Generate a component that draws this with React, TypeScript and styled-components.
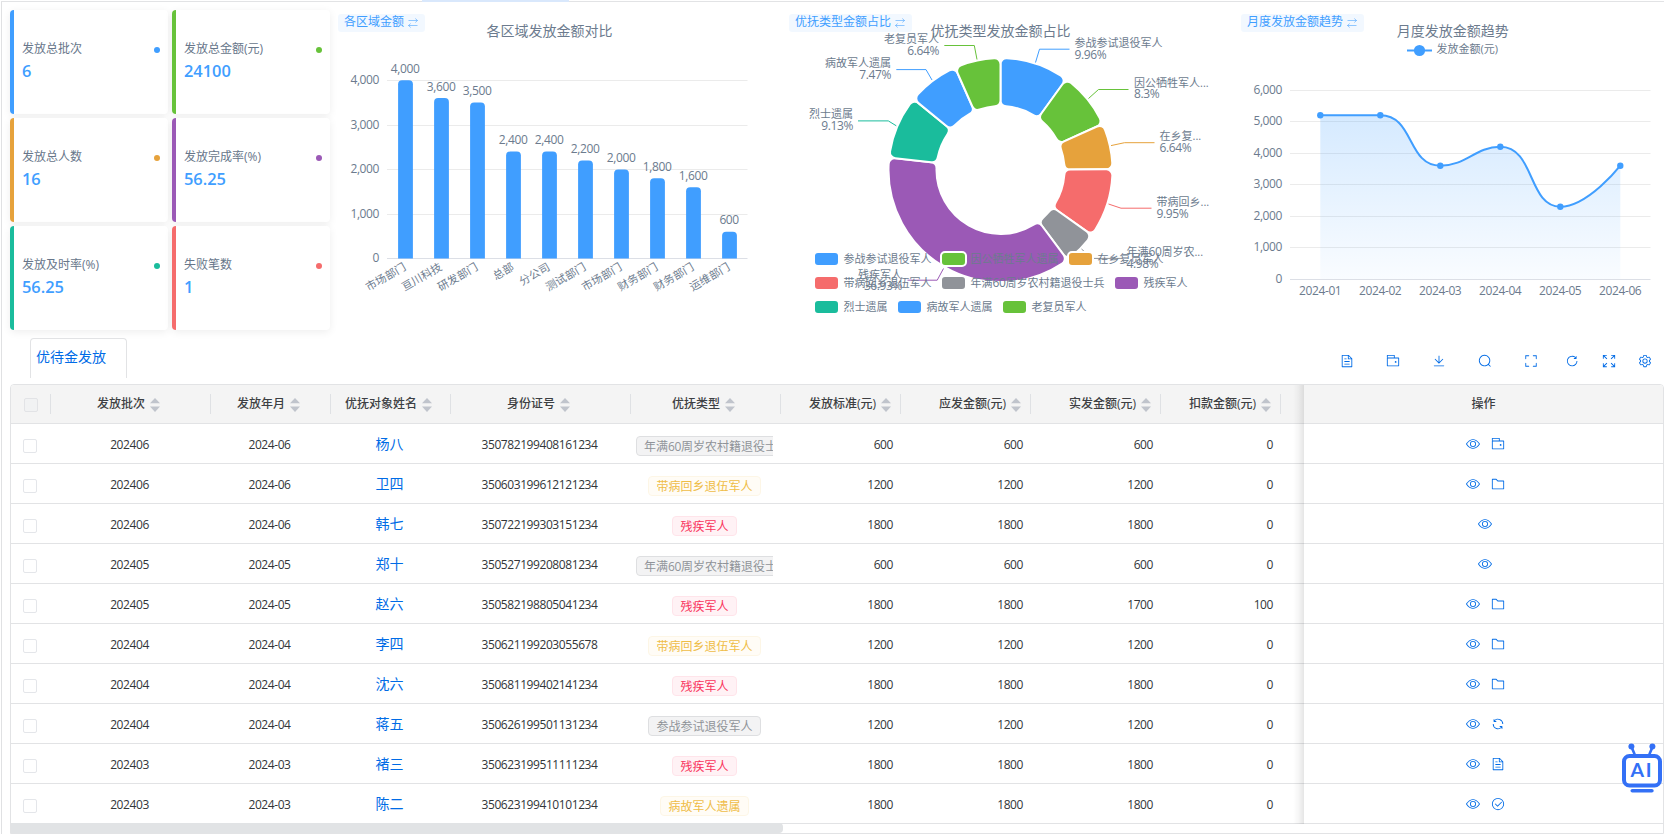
import React from 'react';
import styled, { createGlobalStyle, css } from 'styled-components';

const FONT = "'Open Sans', 'Noto Sans CJK SC', sans-serif";
const PRIMARY = '#006be6';
const BLUE = '#409eff';
const GREEN = '#67c23a';
const ORANGE = '#e6a23c';
const RED = '#f56c6c';
const GRAY = '#909399';
const PURPLE = '#9b59b6';
const TEAL = '#1abc9c';
const CHART_TEXT = '#6c7b8e';
const LINE = '#e2e3e5';

const GlobalStyle = createGlobalStyle`
  * { box-sizing: border-box; }
  html, body { margin: 0; padding: 0; background: #fff; overflow: hidden; }
  body { font-family: ${FONT}; font-size: 12px; color: #323639; }
`;

const Page = styled.div`
  position: relative;
  width: 1664px;
  height: 836px;
  overflow: hidden;
  padding-left: 1px;
`;

const TopEdge = styled.div`
  height: 2px;
  border-bottom: 1px solid #e2e3e5;
  display: flex;
  padding-left: 421px;
`;

const ActiveTabEdge = styled.div`
  width: 147px;
  height: 2px;
  background: #d9e8fc;
`;

const Body = styled.main`
  height: 832px;
  border-left: 1px solid #e0e1e3;
  padding: 8px 0 0 8px;
`;

const Dashboard = styled.section`
  display: flex;
  height: 320px;
  gap: 8px;
`;

const CardGrid = styled.div`
  flex: none;
  display: grid;
  grid-template-columns: 158px 158px;
  grid-template-rows: repeat(3, 104px);
  gap: 4px;
`;

const Card = styled.div<{ $color: string }>`
  display: flex;
  flex-direction: column;
  justify-content: center;
  padding: 0 8px;
  border-left: 4px solid ${(p) => p.$color};
  border-radius: 4px;
  background: #fff;
  box-shadow: 0 2px 8px rgba(0, 0, 0, 0.07);
`;

const CardHead = styled.div`
  display: flex;
  align-items: center;
  justify-content: space-between;
  height: 20px;
  line-height: 18px;
  color: #67768a;
`;

const CardLabel = styled.span`
  height: 20px;
`;

const Dot = styled.i<{ $color: string }>`
  width: 6px;
  height: 6px;
  border-radius: 50%;
  background: ${(p) => p.$color};
`;

const CardValue = styled.div`
  height: 24px;
  line-height: 22px;
  font-size: 16.4px;
  font-weight: 600;
  color: ${BLUE};
`;

const Charts = styled.div`
  flex: 1;
  display: grid;
  grid-template-columns: 451px 452px 1fr;
  margin-top: -10px;
`;

const Panel = styled.div`
  position: relative;
  width: 423px;
  height: 330px;
`;

const SwitchTag = styled.div`
  position: absolute;
  left: 0;
  top: 14px;
  height: 18px;
  padding: 0 7px 0 6px;
  display: flex;
  align-items: center;
  gap: 4px;
  border-radius: 3px;
  background: rgba(64, 158, 255, 0.07);
  color: ${BLUE};
  line-height: 16px;
  white-space: nowrap;
`;

const SwitchLabel = styled.span`
  height: 18px;
`;

const ChartSvg = styled.svg`
  display: block;
  overflow: visible;
  font-family: ${FONT};
  font-size: 11px;
  fill: ${CHART_TEXT};
`;

const Title = styled.text`
  font-size: 14px;
  text-anchor: middle;
`;

const NumText = styled.text`
  font-size: 12px;
  letter-spacing: -0.4px;
`;

const NumSpan = styled.tspan`
  font-size: 12px;
  letter-spacing: -0.4px;
`;

const ListBar = styled.div`
  display: flex;
  justify-content: space-between;
  height: 54px;
  padding: 8px 1px 0 20px;
`;

const ListTab = styled.div`
  width: 97px;
  height: 40px;
  padding-left: 5px;
  border: 1px solid ${LINE};
  border-bottom: 0;
  border-radius: 4px 4px 0 0;
  font-size: 14px;
  line-height: 36px;
  color: ${PRIMARY};
`;

const Tools = styled.div`
  display: flex;
  height: 46px;
`;

const ToolButton = styled.span<{ $w: number }>`
  width: ${(p) => p.$w}px;
  display: flex;
  align-items: center;
  justify-content: center;
  color: ${PRIMARY};
`;

const Table = styled.div`
  position: relative;
  width: 1654px;
  height: 450px;
  border: 1px solid ${LINE};
  border-radius: 4px 4px 0 0;
  overflow: hidden;
`;

const Row = styled.div<{ $head?: boolean }>`
  display: flex;
  height: ${(p) => (p.$head ? 39 : 40)}px;
  border-bottom: 1px solid ${LINE};
  background: ${(p) => (p.$head ? '#f4f4f4' : '#fff')};
`;

type Align = 'center' | 'right';

const Cell = styled.div<{ $w: number; $align?: Align }>`
  flex: none;
  width: ${(p) => p.$w}px;
  padding: ${(p) => (p.$align === 'right' ? '1px 8px 0' : '1px 9px 0 6px')};
  display: flex;
  align-items: center;
  justify-content: ${(p) => (p.$align === 'right' ? 'flex-end' : 'center')};
`;

const HeadCell = styled(Cell)`
  position: relative;
  padding: 0 6px;
  font-weight: 500;
  color: #3d3f43;
  white-space: nowrap;
  &::after {
    content: '';
    position: absolute;
    right: 0;
    top: 9px;
    width: 1px;
    height: 20px;
    background: #dfe1e4;
  }
`;

const HeadLabel = styled.span`
  margin: 0 1px 2px -1px;
`;

const Spacer = styled.div`
  width: 23px;
`;

const ActionCell = styled.div`
  flex: 1;
  display: flex;
  align-items: center;
  justify-content: center;
  gap: 11px;
  padding: 1px 0 0 3px;
  color: ${PRIMARY};
`;

const ActionHead = styled(ActionCell)`
  padding: 0 0 2px;
  font-weight: 500;
  color: #3d3f43;
`;

const FixedShadow = styled.div`
  position: absolute;
  top: 0;
  left: 1282px;
  width: 11px;
  height: 439px;
  background: linear-gradient(to right, rgba(0, 0, 0, 0), rgba(0, 0, 0, 0.035) 50%, rgba(0, 0, 0, 0.1));
`;

const CheckBox = styled.span<{ $head?: boolean }>`
  flex: none;
  width: 14px;
  height: 14px;
  border: 1px solid ${(p) => (p.$head ? '#e2e3e6' : '#e4e6ea')};
  border-radius: 2px;
  background: ${(p) => (p.$head ? '#f1f2f3' : '#fff')};
  margin: ${(p) => (p.$head ? '2px 0 0 -1px' : '3px 0 0 1px')};
`;

const Num = styled.span`
  letter-spacing: -0.42px;
`;

const Name = styled.a`
  font-size: 14px;
  margin-bottom: 2px;
  color: ${PRIMARY};
`;

const SortBox = styled.span`
  flex: none;
  width: 18px;
  display: flex;
  justify-content: center;
  padding-top: 2px;
`;

const TypeCell = styled.div`
  flex: none;
  width: 150px;
  padding: 5px 8px 0 5px;
  display: flex;
  align-items: center;
`;

const TagClip = styled.div`
  flex: 1;
  width: 137px;
  overflow: hidden;
  display: flex;
`;

const toneStyles = {
  gray: css`
    color: #909399;
    background: #f3f3f4;
    border-color: #dedfe1;
  `,
  yellow: css`
    color: #efbd47;
    background: #fffcf6;
    border-color: #fdf6e6;
  `,
  red: css`
    color: #f9345d;
    background: #fff2f5;
    border-color: #ffe4ea;
  `,
};

type Tone = keyof typeof toneStyles;

const TypeTag = styled.span<{ $tone: Tone }>`
  flex: none;
  height: 20px;
  margin: 0 auto;
  padding: 0 7px;
  border: 1px solid;
  border-radius: 4px;
  line-height: 19px;
  white-space: nowrap;
  ${(p) => toneStyles[p.$tone]}
`;

const ScrollTrack = styled.div`
  height: 10px;
  margin-left: -1px;
  margin-top: -1px;
`;

const ScrollThumb = styled.div`
  width: 773px;
  height: 10px;
  border-radius: 0 4px 4px 0;
  background: #e1e3e5;
`;

const Assistant = styled.div`
  position: absolute;
  left: 1622px;
  top: 742px;
`;

const ICONS: Record<string, string> = {
  view: 'M512 160c320 0 512 352 512 352S832 864 512 864 0 512 0 512s192-352 512-352m0 64c-225.28 0-384.128 208.064-436.8 288 52.608 79.872 211.456 288 436.8 288 225.28 0 384.128-208.064 436.8-288-52.608-79.872-211.456-288-436.8-288m0 64a224 224 0 1 1 0 448 224 224 0 0 1 0-448m0 64a160.19 160.19 0 0 0-160 160c0 88.192 71.744 160 160 160s160-71.808 160-160-71.744-160-160-160',
  document: 'M832 384H576V128H192v768h640zm-26.496-64L640 154.496V320zM160 64h480l256 256v608a32 32 0 0 1-32 32H160a32 32 0 0 1-32-32V96a32 32 0 0 1 32-32m160 448h384v64H320zm0-192h160v64H320zm0 384h384v64H320z',
  wallet: 'M640 288h-64V128H128v128H64V96a32 32 0 0 1 32-32h512a32 32 0 0 1 32 32zM128 320v512h768V320zm-32-64h832a32 32 0 0 1 32 32v576a32 32 0 0 1-32 32H96a32 32 0 0 1-32-32V288a32 32 0 0 1 32-32M704 640a64 64 0 1 1 0-128 64 64 0 0 1 0 128',
  download: 'M160 832h704a32 32 0 1 1 0 64H160a32 32 0 1 1 0-64m384-253.696 236.288-236.352 45.248 45.248L508.8 704 192 387.2l45.248-45.248L480 584.704V128h64z',
  search: 'm795.904 750.72 124.992 124.928a32 32 0 0 1-45.248 45.248L750.656 795.904a416 416 0 1 1 45.248-45.248zM480 832a352 352 0 1 0 0-704 352 352 0 0 0 0 704',
  fullscreen: 'm160 96.064 192 .192a32 32 0 0 1 0 64l-192-.192V352a32 32 0 0 1-64 0V96h64zm0 831.872V928H96V672a32 32 0 1 1 64 0v191.936l192-.192a32 32 0 1 1 0 64zM864 96.064V96h64v256a32 32 0 1 1-64 0V160.064l-192 .192a32 32 0 1 1 0-64zm0 831.872-192-.192a32 32 0 0 1 0-64l192 .192V672a32 32 0 1 1 64 0v256h-64z',
  reload: 'M784.512 230.272v-50.56a32 32 0 1 1 64 0v149.056a32 32 0 0 1-32 32H667.52a32 32 0 1 1 0-64h92.992A320 320 0 1 0 524.8 833.152a320 320 0 0 0 320-320h64a384 384 0 0 1-384 384 384 384 0 0 1-384-384 384 384 0 0 1 643.712-282.88z',
  refresh: 'M771.776 794.88A384 384 0 0 1 128 512h64a320 320 0 0 0 555.712 216.448H654.72a32 32 0 1 1 0-64h149.056a32 32 0 0 1 32 32v148.928a32 32 0 1 1-64 0v-50.56zM276.288 295.616h92.992a32 32 0 0 1 0 64H220.16a32 32 0 0 1-32-32V178.56a32 32 0 0 1 64 0v50.56A384 384 0 0 1 896.128 512h-64a320 320 0 0 0-555.776-216.384z',
  check: 'M512 896a384 384 0 1 0 0-768 384 384 0 0 0 0 768m0 64a448 448 0 1 1 0-896 448 448 0 0 1 0 896M745.344 361.344a32 32 0 0 1 45.312 45.312l-288 288a32 32 0 0 1-45.312 0l-160-160a32 32 0 1 1 45.312-45.312L480 626.752z',
  folder: 'M128 192v640h768V320H485.76L357.504 192zm-32-64h287.872l128.384 128H928a32 32 0 0 1 32 32v576a32 32 0 0 1-32 32H96a32 32 0 0 1-32-32V160a32 32 0 0 1 32-32',
  expand: 'M64 64h288v64H174l210 210-46 46L128 174v178H64zM960 64v288h-64V174L686 384l-46-46 210-210H672V64zM64 960V672h64v178l210-210 46 46-210 210h178v64zM960 960H672v-64h178L640 686l46-46 210 210V672h64z',
  setting: 'M600.704 64a32 32 0 0 1 30.464 22.208l35.2 109.376c14.784 7.232 28.928 15.36 42.432 24.512l112.384-24.192a32 32 0 0 1 34.432 15.36L944.32 364.8a32 32 0 0 1-4.032 37.504l-77.12 85.12a357 357 0 0 1 0 49.024l77.12 85.248a32 32 0 0 1 4.032 37.504l-88.704 153.6a32 32 0 0 1-34.432 15.296L708.8 803.904c-13.44 9.088-27.648 17.28-42.368 24.512l-35.264 109.376A32 32 0 0 1 600.704 960H423.296a32 32 0 0 1-30.464-22.208L357.696 828.48a352 352 0 0 1-42.56-24.64l-112.32 24.256a32 32 0 0 1-34.432-15.36L79.68 659.2a32 32 0 0 1 4.032-37.504l77.12-85.248a357 357 0 0 1 0-48.896l-77.12-85.248A32 32 0 0 1 79.68 364.8l88.704-153.6a32 32 0 0 1 34.432-15.296l112.32 24.256c13.568-9.152 27.776-17.408 42.56-24.64l35.2-109.312A32 32 0 0 1 423.232 64H600.64zm-23.424 64H446.72l-36.352 113.088-24.512 11.968a294 294 0 0 0-34.816 20.096l-22.656 15.36-116.224-25.088-65.28 113.152 79.68 88.192-1.92 27.136a293 293 0 0 0 0 40.192l1.92 27.136-79.808 88.192 65.344 113.152 116.224-25.024 22.656 15.296a294 294 0 0 0 34.816 20.096l24.512 11.968L446.72 896h130.688l36.48-113.152 24.448-11.904a288 288 0 0 0 34.752-20.096l22.592-15.296 116.288 25.024 65.28-113.152-79.744-88.192 1.92-27.136a293 293 0 0 0 0-40.256l-1.92-27.136 79.808-88.128-65.344-113.152-116.288 24.96-22.592-15.232a288 288 0 0 0-34.752-20.096l-24.448-11.904L577.344 128zM512 320a192 192 0 1 1 0 384 192 192 0 0 1 0-384m0 64a128 128 0 1 0 0 256 128 128 0 0 0 0-256',
};

const Icon = ({ name }: { name: string }) => (
  <svg width="14" height="14" viewBox="0 0 1024 1024" fill="currentColor">
    <path d={ICONS[name]} />
  </svg>
);

const SwapIcon = () => (
  <svg width="10" height="10" viewBox="0 0 10 10" fill="none" stroke={BLUE} strokeOpacity="0.55" strokeWidth="1">
    <path d="M0.5 2.5H9.5M7.3 0.5L9.5 2.5L7.3 4.5M9.5 7.5H0.5M2.7 5.5L0.5 7.5L2.7 9.5" />
  </svg>
);

const SortIcon = () => (
  <SortBox>
    <svg width="10" height="14" viewBox="0 0 10 14" fill="#c0c4cc">
      <path d="M5 0L10 5.2H0z" />
      <path d="M5 14L10 8.6H0z" />
    </svg>
  </SortBox>
);

const cards = [
  { label: '发放总批次', value: '6', color: BLUE },
  { label: '发放总金额(元)', value: '24100', color: GREEN },
  { label: '发放总人数', value: '16', color: ORANGE },
  { label: '发放完成率(%)', value: '56.25', color: PURPLE },
  { label: '发放及时率(%)', value: '56.25', color: TEAL },
  { label: '失败笔数', value: '1', color: RED },
];

const bars: [string, number][] = [
  ['市场部门', 4000],
  ['亘川科技', 3600],
  ['研发部门', 3500],
  ['总部', 2400],
  ['分公司', 2400],
  ['测试部门', 2200],
  ['市场部门', 2000],
  ['财务部门', 1800],
  ['财务部门', 1600],
  ['运维部门', 600],
];

const BarChart = () => (
  <ChartSvg width="423" height="316" viewBox="338 0 423 316">
    <Title x="549.5" y="35.5">各区域发放金额对比</Title>
    {[4000, 3000, 2000, 1000, 0].map((v) => {
      const y = Math.round(258 - (v / 4000) * 178) + 0.5;
      return (
        <g key={v}>
          <line x1="387" x2="747.5" y1={y} y2={y} stroke={v ? '#ebebeb' : '#dcdfe6'} />
          <NumText x="379" y={y + 3} textAnchor="end">{v.toLocaleString('en-US')}</NumText>
        </g>
      );
    })}
    {bars.map(([name, v], i) => {
      const cx = 405.5 + i * 36;
      const top = 258.5 - (v / 4000) * 178.2;
      return (
        <g key={i}>
          <path
            d={`M${cx - 7.4} 258.5V${top + 4}a4 4 0 0 1 4-4h6.8a4 4 0 0 1 4 4V258.5z`}
            fill={BLUE}
          />
          <NumText x={cx - 0.4} y={top - 7.6} textAnchor="middle">{v.toLocaleString('en-US')}</NumText>
          <text textAnchor="end" transform={`translate(${cx + 1.2} 269.3) rotate(-30)`}>{name}</text>
        </g>
      );
    })}
  </ChartSvg>
);

type Slice = {
  pct: number;
  color: string;
  label: React.ReactNode;
  x: number;
  y: number;
  anchor: 'start' | 'end';
  line: string;
};

const slices: Slice[] = [
  { pct: 9.96, color: BLUE, label: '参战参试退役军人', x: 1074.5, y: 47.3, anchor: 'start', line: '1035.5,62.5 1039.5,49.2 1069.5,49.2' },
  { pct: 8.3, color: GREEN, label: '因公牺牲军人...', x: 1134, y: 87, anchor: 'start', line: '1088.5,98.5 1098.5,89.5 1128.5,89.5' },
  { pct: 6.64, color: ORANGE, label: '在乡复...', x: 1159.5, y: 140.2, anchor: 'start', line: '1111,145.6 1124.5,142.7 1154.5,142.7' },
  { pct: 9.95, color: RED, label: '带病回乡...', x: 1156.5, y: 206.3, anchor: 'start', line: '1108.5,204 1121,208.2 1151.5,208.2' },
  { pct: 4.98, color: GRAY, label: <>年满<NumSpan>60</NumSpan>周岁农...</>, x: 1126.5, y: 256.2, anchor: 'start', line: '1081.5,249 1092,258.4 1122,258.4' },
  { pct: 36.93, color: PURPLE, label: '残疾军人', x: 902, y: 278.5, anchor: 'end', line: '943.5,268.5 937.2,280.2 907.5,280.2' },
  { pct: 9.13, color: TEAL, label: '烈士遗属', x: 853, y: 118.3, anchor: 'end', line: '896.3,125.8 888.3,120.9 858,120.9' },
  { pct: 7.47, color: BLUE, label: '病故军人遗属', x: 891, y: 67.3, anchor: 'end', line: '932,80 926,69.6 896.3,69.6' },
  { pct: 6.64, color: GREEN, label: '老复员军人', x: 939, y: 43.1, anchor: 'end', line: '977,59.5 974.3,45.5 944.3,45.5' },
];

const polar = (radius: number, angle: number) =>
  `${(1000.5 + radius * Math.sin(angle)).toFixed(2)} ${(170 - radius * Math.cos(angle)).toFixed(2)}`;

/* Annular sector with rounded corners; angles run clockwise from the top. */
const sector = (a0: number, a1: number) => {
  const R = 112;
  const r = 64;
  const c = 6;
  const dOut = Math.asin(c / (R - c));
  const dIn = Math.asin(c / (r + c));
  const tOut = Math.sqrt((R - c) ** 2 - c ** 2);
  const tIn = Math.sqrt((r + c) ** 2 - c ** 2);
  const large = a1 - a0 > Math.PI ? 1 : 0;
  return [
    `M${polar(tOut, a0)}`,
    `A${c} ${c} 0 0 1 ${polar(R, a0 + dOut)}`,
    `A${R} ${R} 0 ${large} 1 ${polar(R, a1 - dOut)}`,
    `A${c} ${c} 0 0 1 ${polar(tOut, a1)}`,
    `L${polar(tIn, a1)}`,
    `A${c} ${c} 0 0 1 ${polar(r, a1 - dIn)}`,
    `A${r} ${r} 0 ${large} 0 ${polar(r, a0 + dIn)}`,
    `A${c} ${c} 0 0 1 ${polar(tIn, a0)}`,
    'Z',
  ].join('');
};

const sectors = slices.map((s, i) => {
  const before = slices.slice(0, i).reduce((sum, t) => sum + t.pct, 0);
  return sector((before / 100) * 2 * Math.PI, ((before + s.pct) / 100) * 2 * Math.PI);
});

const pieLegend: { x: number; y: number; color: string; label: React.ReactNode }[] = [
  { x: 815, y: 259, color: BLUE, label: '参战参试退役军人' },
  { x: 942, y: 259, color: GREEN, label: '因公牺牲军人遗属' },
  { x: 1069, y: 259, color: ORANGE, label: '在乡复员军人' },
  { x: 815, y: 283, color: RED, label: '带病回乡退伍军人' },
  { x: 942, y: 283, color: GRAY, label: <>年满<NumSpan>60</NumSpan>周岁农村籍退役士兵</> },
  { x: 1115, y: 283, color: PURPLE, label: '残疾军人' },
  { x: 815, y: 307, color: TEAL, label: '烈士遗属' },
  { x: 898, y: 307, color: BLUE, label: '病故军人遗属' },
  { x: 1003, y: 307, color: GREEN, label: '老复员军人' },
];

const PieChart = () => (
  <ChartSvg width="423" height="316" viewBox="789 0 423 316">
    {slices.map((s, i) => (
      <path key={i} d={sectors[i]} fill={s.color} stroke="#fff" strokeWidth="2" />
    ))}
    {slices.map((s, i) => (
      <g key={i}>
        <polyline points={s.line} fill="none" stroke={s.color} />
        <text x={s.x} y={s.y} textAnchor={s.anchor}>{s.label}</text>
        <NumText x={s.x} y={s.y + 11.4} textAnchor={s.anchor}>{`${s.pct}%`}</NumText>
      </g>
    ))}
    <Title x="1000.5" y="35.5">优抚类型发放金额占比</Title>
    {pieLegend.map((l, i) => (
      <g key={i}>
        <rect x={l.x - 1} y={l.y - 7} width="25" height="14" rx="4" fill={l.color} stroke="#fff" strokeWidth="2" />
        <text x={l.x + 28.6} y={l.y + 3.5}>{l.label}</text>
      </g>
    ))}
  </ChartSvg>
);

const CURVE =
  'M1320.3 115.3L1380.3 115.3C1414.3 115.3 1407 165.7 1440.3 165.7C1467 165.7 1474.8 146.8 1500.3 146.8C1534.8 146.8 1528 206.7 1560.3 206.7C1588 206.7 1620.3 165.7 1620.3 165.7';

const LineChart = () => (
  <ChartSvg width="423" height="316" viewBox="1241 0 423 316">
    <defs>
      <linearGradient id="trend" x1="0" x2="0" y1="0" y2="1">
        <stop offset="0" stopColor={BLUE} stopOpacity="0.22" />
        <stop offset="1" stopColor={BLUE} stopOpacity="0.03" />
      </linearGradient>
    </defs>
    <Title x="1452.7" y="35.5">月度发放金额趋势</Title>
    <line x1="1407" x2="1432" y1="50.5" y2="50.5" stroke={BLUE} strokeWidth="2" />
    <circle cx="1419.5" cy="50.5" r="5.6" fill={BLUE} />
    <text x="1436.5" y="53.3">发放金额(元)</text>
    {[6000, 5000, 4000, 3000, 2000, 1000, 0].map((v) => {
      const y = Math.round(278.7 - (v / 6000) * 188.7) + 0.5;
      return (
        <g key={v}>
          <line x1="1290" x2="1650.5" y1={y} y2={y} stroke={v ? '#ebebeb' : '#dcdfe6'} />
          <NumText x="1282" y={y + 3} textAnchor="end">{v.toLocaleString('en-US')}</NumText>
        </g>
      );
    })}
    <path d={`${CURVE}V279H1320.3z`} fill="url(#trend)" />
    <path d={CURVE} fill="none" stroke={BLUE} strokeWidth="2" />
    {[115.3, 115.3, 165.7, 146.8, 206.7, 165.7].map((y, i) => (
      <g key={i}>
        <circle cx={1320.3 + i * 60} cy={y} r="3.2" fill={BLUE} />
        <NumText x={1320.2 + i * 60} y="295.4" textAnchor="middle">{`2024-0${i + 1}`}</NumText>
      </g>
    ))}
  </ChartSvg>
);

const columns: { label: string; w: number; align?: Align }[] = [
  { label: '发放批次', w: 160 },
  { label: '发放年月', w: 120 },
  { label: '优抚对象姓名', w: 120 },
  { label: '身份证号', w: 180 },
  { label: '优抚类型', w: 150 },
  { label: '发放标准(元)', w: 120, align: 'right' },
  { label: '应发金额(元)', w: 130, align: 'right' },
  { label: '实发金额(元)', w: 130, align: 'right' },
  { label: '扣款金额(元)', w: 120, align: 'right' },
];

type Payment = {
  month: string;
  name: string;
  id: string;
  type: React.ReactNode;
  tone: Tone;
  due: number;
  paid: number;
  icon?: string;
};

const veteran60 = <>年满<Num>60</Num>周岁农村籍退役士兵</>;

const rows: Payment[] = [
  { month: '06', name: '杨八', id: '350782199408161234', type: veteran60, tone: 'gray', due: 600, paid: 600, icon: 'wallet' },
  { month: '06', name: '卫四', id: '350603199612121234', type: '带病回乡退伍军人', tone: 'yellow', due: 1200, paid: 1200, icon: 'folder' },
  { month: '06', name: '韩七', id: '350722199303151234', type: '残疾军人', tone: 'red', due: 1800, paid: 1800 },
  { month: '05', name: '郑十', id: '350527199208081234', type: veteran60, tone: 'gray', due: 600, paid: 600 },
  { month: '05', name: '赵六', id: '350582198805041234', type: '残疾军人', tone: 'red', due: 1800, paid: 1700, icon: 'folder' },
  { month: '04', name: '李四', id: '350621199203055678', type: '带病回乡退伍军人', tone: 'yellow', due: 1200, paid: 1200, icon: 'folder' },
  { month: '04', name: '沈六', id: '350681199402141234', type: '残疾军人', tone: 'red', due: 1800, paid: 1800, icon: 'folder' },
  { month: '04', name: '蒋五', id: '350626199501131234', type: '参战参试退役军人', tone: 'gray', due: 1200, paid: 1200, icon: 'refresh' },
  { month: '03', name: '褚三', id: '350623199511111234', type: '残疾军人', tone: 'red', due: 1800, paid: 1800, icon: 'document' },
  { month: '03', name: '陈二', id: '350623199410101234', type: '病故军人遗属', tone: 'yellow', due: 1800, paid: 1800, icon: 'check' },
];

const tools: [string, number][] = [
  ['document', 46],
  ['wallet', 46],
  ['download', 46],
  ['search', 46],
  ['fullscreen', 46],
  ['reload', 36],
  ['expand', 37],
  ['setting', 36],
];

const AssistantLogo = () => (
  <svg width="41" height="52" viewBox="0 0 41 52" fill="none" stroke="#3370f6" strokeLinecap="round">
    <path d="M9.5 5L12.5 12M30.5 5L27.5 12" strokeWidth="2.6" />
    <circle cx="9.4" cy="4.4" r="3" fill="#3370f6" stroke="none" />
    <circle cx="30.4" cy="4.4" r="3" fill="#3370f6" stroke="none" />
    <rect x="2" y="14" width="36" height="29.4" rx="5.5" fill="#fff" strokeWidth="4" />
    <path d="M10.3 48.7H29.9" strokeWidth="3.6" />
    <text x="8.6" y="35.2" fill="#3370f6" stroke="none" fontFamily="Lato, sans-serif" fontSize="19.5" fontWeight="700" letterSpacing="1.6">
      AI
    </text>
  </svg>
);

export default function App() {
  return (
    <Page>
      <GlobalStyle />
      <TopEdge>
        <ActiveTabEdge />
      </TopEdge>
      <Body>
        <Dashboard>
          <CardGrid>
            {cards.map((c) => (
              <Card key={c.label} $color={c.color}>
                <CardHead>
                  <CardLabel>{c.label}</CardLabel>
                  <Dot $color={c.color} />
                </CardHead>
                <CardValue>{c.value}</CardValue>
              </Card>
            ))}
          </CardGrid>
          <Charts>
            <Panel>
              <BarChart />
              <SwitchTag><SwitchLabel>各区域金额</SwitchLabel><SwapIcon /></SwitchTag>
            </Panel>
            <Panel>
              <PieChart />
              <SwitchTag><SwitchLabel>优抚类型金额占比</SwitchLabel><SwapIcon /></SwitchTag>
            </Panel>
            <Panel>
              <LineChart />
              <SwitchTag><SwitchLabel>月度发放金额趋势</SwitchLabel><SwapIcon /></SwitchTag>
            </Panel>
          </Charts>
        </Dashboard>
        <ListBar>
          <ListTab>优待金发放</ListTab>
          <Tools>
            {tools.map(([name, w]) => (
              <ToolButton key={name} $w={w}>
                <Icon name={name} />
              </ToolButton>
            ))}
          </Tools>
        </ListBar>
        <Table>
          <Row $head>
            <HeadCell $w={40}>
              <CheckBox $head />
            </HeadCell>
            {columns.map((c) => (
              <HeadCell key={c.label} $w={c.w} $align={c.align}>
                <HeadLabel>{c.label}</HeadLabel>
                <SortIcon />
              </HeadCell>
            ))}
            <Spacer />
            <ActionHead>操作</ActionHead>
          </Row>
          {rows.map((r) => (
            <Row key={r.id}>
              <Cell $w={40}><CheckBox /></Cell>
              <Cell $w={160}><Num>{`2024${r.month}`}</Num></Cell>
              <Cell $w={120}><Num>{`2024-${r.month}`}</Num></Cell>
              <Cell $w={120}><Name>{r.name}</Name></Cell>
              <Cell $w={180}><Num>{r.id}</Num></Cell>
              <TypeCell>
                <TagClip>
                  <TypeTag $tone={r.tone}>{r.type}</TypeTag>
                </TagClip>
              </TypeCell>
              <Cell $w={120} $align="right"><Num>{r.due}</Num></Cell>
              <Cell $w={130} $align="right"><Num>{r.due}</Num></Cell>
              <Cell $w={130} $align="right"><Num>{r.paid}</Num></Cell>
              <Cell $w={120} $align="right"><Num>{r.due - r.paid}</Num></Cell>
              <Spacer />
              <ActionCell>
                <Icon name="view" />
                {r.icon && <Icon name={r.icon} />}
              </ActionCell>
            </Row>
          ))}
          <FixedShadow />
          <ScrollTrack>
            <ScrollThumb />
          </ScrollTrack>
        </Table>
      </Body>
      <Assistant>
        <AssistantLogo />
      </Assistant>
    </Page>
  );
}
